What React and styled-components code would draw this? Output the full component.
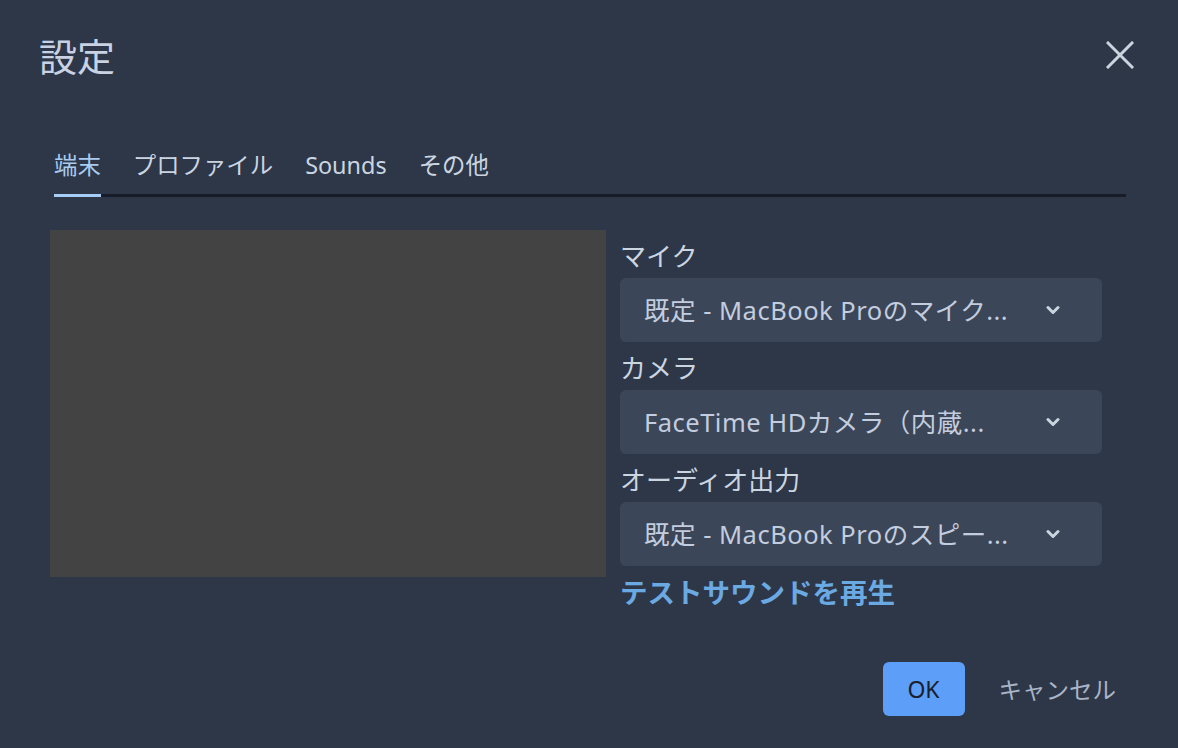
import React from "react";
import styled, { createGlobalStyle } from "styled-components";

const Global = createGlobalStyle`
  html, body { margin: 0; padding: 0; background: #2D3748; }
  body { font-family: "Noto Sans", "Noto Sans CJK JP", sans-serif; color: #CBD5E0; }
  * { box-sizing: border-box; }
`;

const Dialog = styled.div`
  width: 1178px;
  height: 748px;
  background: #2D3748;
  display: flex;
  flex-direction: column;
`;

const Header = styled.div`
  display: flex;
  align-items: center;
  justify-content: space-between;
  height: 58px;
  margin-top: 26px;
  padding: 0 44px 0 39px;
`;

const Title = styled.h1`
  margin: 0;
  font-family: "Noto Sans CJK JP", sans-serif;
  font-size: 38px;
  font-weight: 400;
  color: #C8D2E3;
  line-height: 58px;
`;

const CloseButton = styled.button`
  width: 28px;
  height: 28px;
  padding: 0;
  border: none;
  background: transparent;
  display: flex;
  align-items: center;
  justify-content: center;
  cursor: pointer;
`;

const TabList = styled.div`
  display: flex;
  gap: 32px;
  margin: 64px 52px 0 54px;
  border-bottom: 3px solid #171C28;
`;

const Tab = styled.div`
  font-family: "Noto Sans", "Noto Sans CJK JP", sans-serif;
  font-size: 23.4px;
  line-height: 34px;
  padding-bottom: 12px;
  margin-bottom: -3px;
  border-bottom: 3px solid ${(p) => (p.$active ? "#A6CDF5" : "transparent")};
  color: ${(p) => (p.$active ? "#A9CBEF" : "#CBD5E0")};
`;

const Content = styled.div`
  display: flex;
  gap: 14px;
  margin: 33px 0 0 50px;
`;

const Video = styled.div`
  width: 556px;
  height: 347px;
  background: #434343;
`;

const Column = styled.div`
  width: 482px;
  display: flex;
  flex-direction: column;
`;

const Label = styled.div`
  font-family: "Noto Sans CJK JP", sans-serif;
  font-size: 26px;
  line-height: 46px;
  padding-top: 2px;
  color: #CBD5E0;
`;

const Select = styled.div`
  position: relative;
  height: 64px;
  border-radius: 6px;
  background: #3B4658;
  display: flex;
  align-items: center;
  padding: 0 70px 4px 24px;
`;

const SelectText = styled.span`
  font-family: "Noto Sans", "Noto Sans CJK JP", sans-serif;
  font-size: 25.5px;
  letter-spacing: 0.5px;
  color: #C3CDDF;
  white-space: nowrap;
`;

const Chevron = styled.svg`
  position: absolute;
  right: 42px;
  top: 50%;
  transform: translateY(-50%);
`;

const TestLink = styled.a`
  font-family: "Noto Sans CJK JP", sans-serif;
  font-size: 27.5px;
  font-weight: 700;
  line-height: 50px;
  color: #6BA9E2;
  text-decoration: none;
  cursor: pointer;
`;

const Footer = styled.div`
  display: flex;
  justify-content: flex-end;
  gap: 16px;
  margin-top: 46px;
  padding-right: 44px;
`;

const OkButton = styled.button`
  width: 82px;
  height: 54px;
  border: none;
  border-radius: 6px;
  background: #5C9EF8;
  color: #1A202C;
  font-family: "Noto Sans", sans-serif;
  font-size: 23px;
  cursor: pointer;
`;

const CancelButton = styled.button`
  height: 54px;
  padding: 0 18px;
  border: none;
  background: transparent;
  color: #A9B4C6;
  font-family: "Noto Sans CJK JP", sans-serif;
  font-size: 23.5px;
  cursor: pointer;
`;

const devices = [
  { label: "マイク", value: "既定 - MacBook Proのマイク..." },
  { label: "カメラ", value: "FaceTime HDカメラ（内蔵..." },
  { label: "オーディオ出力", value: "既定 - MacBook Proのスピー..." },
];

export default function App() {
  return (
    <>
      <Global />
      <Dialog>
        <Header>
          <Title>設定</Title>
          <CloseButton aria-label="閉じる">
            <svg width="28" height="28" viewBox="0 0 28 28">
              <path d="M2 2 L26 26 M26 2 L2 26" stroke="#CBD5E0" strokeWidth="3" strokeLinecap="square" />
            </svg>
          </CloseButton>
        </Header>
        <TabList>
          <Tab $active>端末</Tab>
          <Tab>プロファイル</Tab>
          <Tab>Sounds</Tab>
          <Tab>その他</Tab>
        </TabList>
        <Content>
          <Video />
          <Column>
            {devices.map((d) => (
              <React.Fragment key={d.label}>
                <Label>{d.label}</Label>
                <Select>
                  <SelectText>{d.value}</SelectText>
                  <Chevron width="14" height="10" viewBox="0 0 14 10">
                    <path d="M2 2.5 L7 7.5 L12 2.5" fill="none" stroke="#CBD5E0" strokeWidth="3" strokeLinecap="round" strokeLinejoin="round" />
                  </Chevron>
                </Select>
              </React.Fragment>
            ))}
            <TestLink>テストサウンドを再生</TestLink>
          </Column>
        </Content>
        <Footer>
          <OkButton>OK</OkButton>
          <CancelButton>キャンセル</CancelButton>
        </Footer>
      </Dialog>
    </>
  );
}
